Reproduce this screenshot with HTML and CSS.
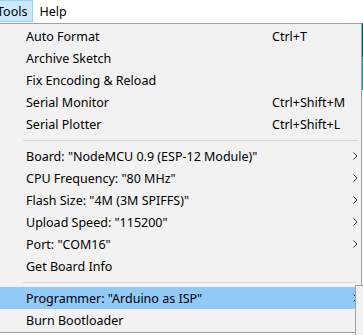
FILE: index.html
```html
<!DOCTYPE html>
<html>
<head>
	<meta charset="UTF-8">
	<title>Tools menu</title>
	<link rel="stylesheet" href="styles.css">
</head>
<body>
	<div class="menubar">
		<span class="menubar-item active">Tools</span>
		<span class="menubar-item">Help</span>
	</div>

	<div class="menu">
		<div class="item"><span>Auto Format</span><span class="key">Ctrl+T</span></div>
		<div class="item"><span>Archive Sketch</span></div>
		<div class="item"><span>Fix Encoding &amp; Reload</span></div>
		<div class="item"><span>Serial Monitor</span><span class="key">Ctrl+Shift+M</span></div>
		<div class="item"><span>Serial Plotter</span><span class="key">Ctrl+Shift+L</span></div>
		<div class="sep"></div>
		<div class="item"><span>Board: "NodeMCU 0.9 (ESP-12 Module)"</span><span class="key"></span><svg class="arrow" viewBox="0 0 5 8"><path d="M0.5 0.5 L4 4 L0.5 7.5"/></svg></div>
		<div class="item"><span>CPU Frequency: "80 MHz"</span><span class="key"></span><svg class="arrow" viewBox="0 0 5 8"><path d="M0.5 0.5 L4 4 L0.5 7.5"/></svg></div>
		<div class="item"><span>Flash Size: "4M (3M SPIFFS)"</span><span class="key"></span><svg class="arrow" viewBox="0 0 5 8"><path d="M0.5 0.5 L4 4 L0.5 7.5"/></svg></div>
		<div class="item"><span>Upload Speed: "115200"</span><span class="key"></span><svg class="arrow" viewBox="0 0 5 8"><path d="M0.5 0.5 L4 4 L0.5 7.5"/></svg></div>
		<div class="item"><span>Port: "COM16"</span><span class="key"></span><svg class="arrow" viewBox="0 0 5 8"><path d="M0.5 0.5 L4 4 L0.5 7.5"/></svg></div>
		<div class="item"><span>Get Board Info</span></div>
		<div class="sep"></div>
		<div class="item selected"><span>Programmer: "Arduino as ISP"</span><span class="key"></span><svg class="arrow" viewBox="0 0 5 8"><path d="M0.5 0.5 L4 4 L0.5 7.5"/></svg></div>
		<div class="item"><span>Burn Bootloader</span></div>
	</div>

	<div class="submenu"></div>
	<div class="window-edge"></div>
</body>
</html>
```

FILE: styles.css
```css
body {
	margin: 0;
	padding: 0;
	background-color: #fff;
	font-family: "Noto Sans", "Open Sans", sans-serif;
	font-size: 12.5px;
	color: #000;
	overflow: hidden;
}

.menubar {
	display: flex;
	height: 23px;
	margin-left: -9px;
}

.menubar-item {
	display: flex;
	align-items: center;
	height: 22px;
	box-sizing: border-box;
	padding: 0 5px;
	border: 1px solid transparent;
}

.menubar-item.active {
	background-color: #cce8ff;
	border-color: #99d1ff;
}

.menu {
	width: 361px;
	margin-left: -1px;
	border: 1px solid #a0a0a0;
	padding: 1px 0 1px 0;
	background-color: #f2f2f2;
}

.item {
	display: grid;
	grid-template-columns: 246px 81px 9px;
	align-items: center;
	height: 22px;
	padding-left: 26px;
	white-space: nowrap;
}

.item.selected {
	background-color: #91c9f7;
}

.arrow {
	width: 5px;
	height: 8px;
	fill: none;
	stroke: #333;
	stroke-width: 1;
}

.sep {
	height: 1px;
	margin: 5px 3px 4px 23px;
	background-color: #d7d7d7;
}

.submenu {
	position: absolute;
	left: 355px;
	top: 285px;
	width: 20px;
	height: 60px;
	border-left: 1px solid #a0a0a0;
	border-top: 1px solid #a0a0a0;
	background-color: #f2f2f2;
}

.window-edge {
	position: absolute;
	left: 362px;
	top: 23px;
	width: 1px;
	height: 67px;
	background: linear-gradient(#00676b 0, #00676b 34px, #1aa3a7 34px);
}
```
